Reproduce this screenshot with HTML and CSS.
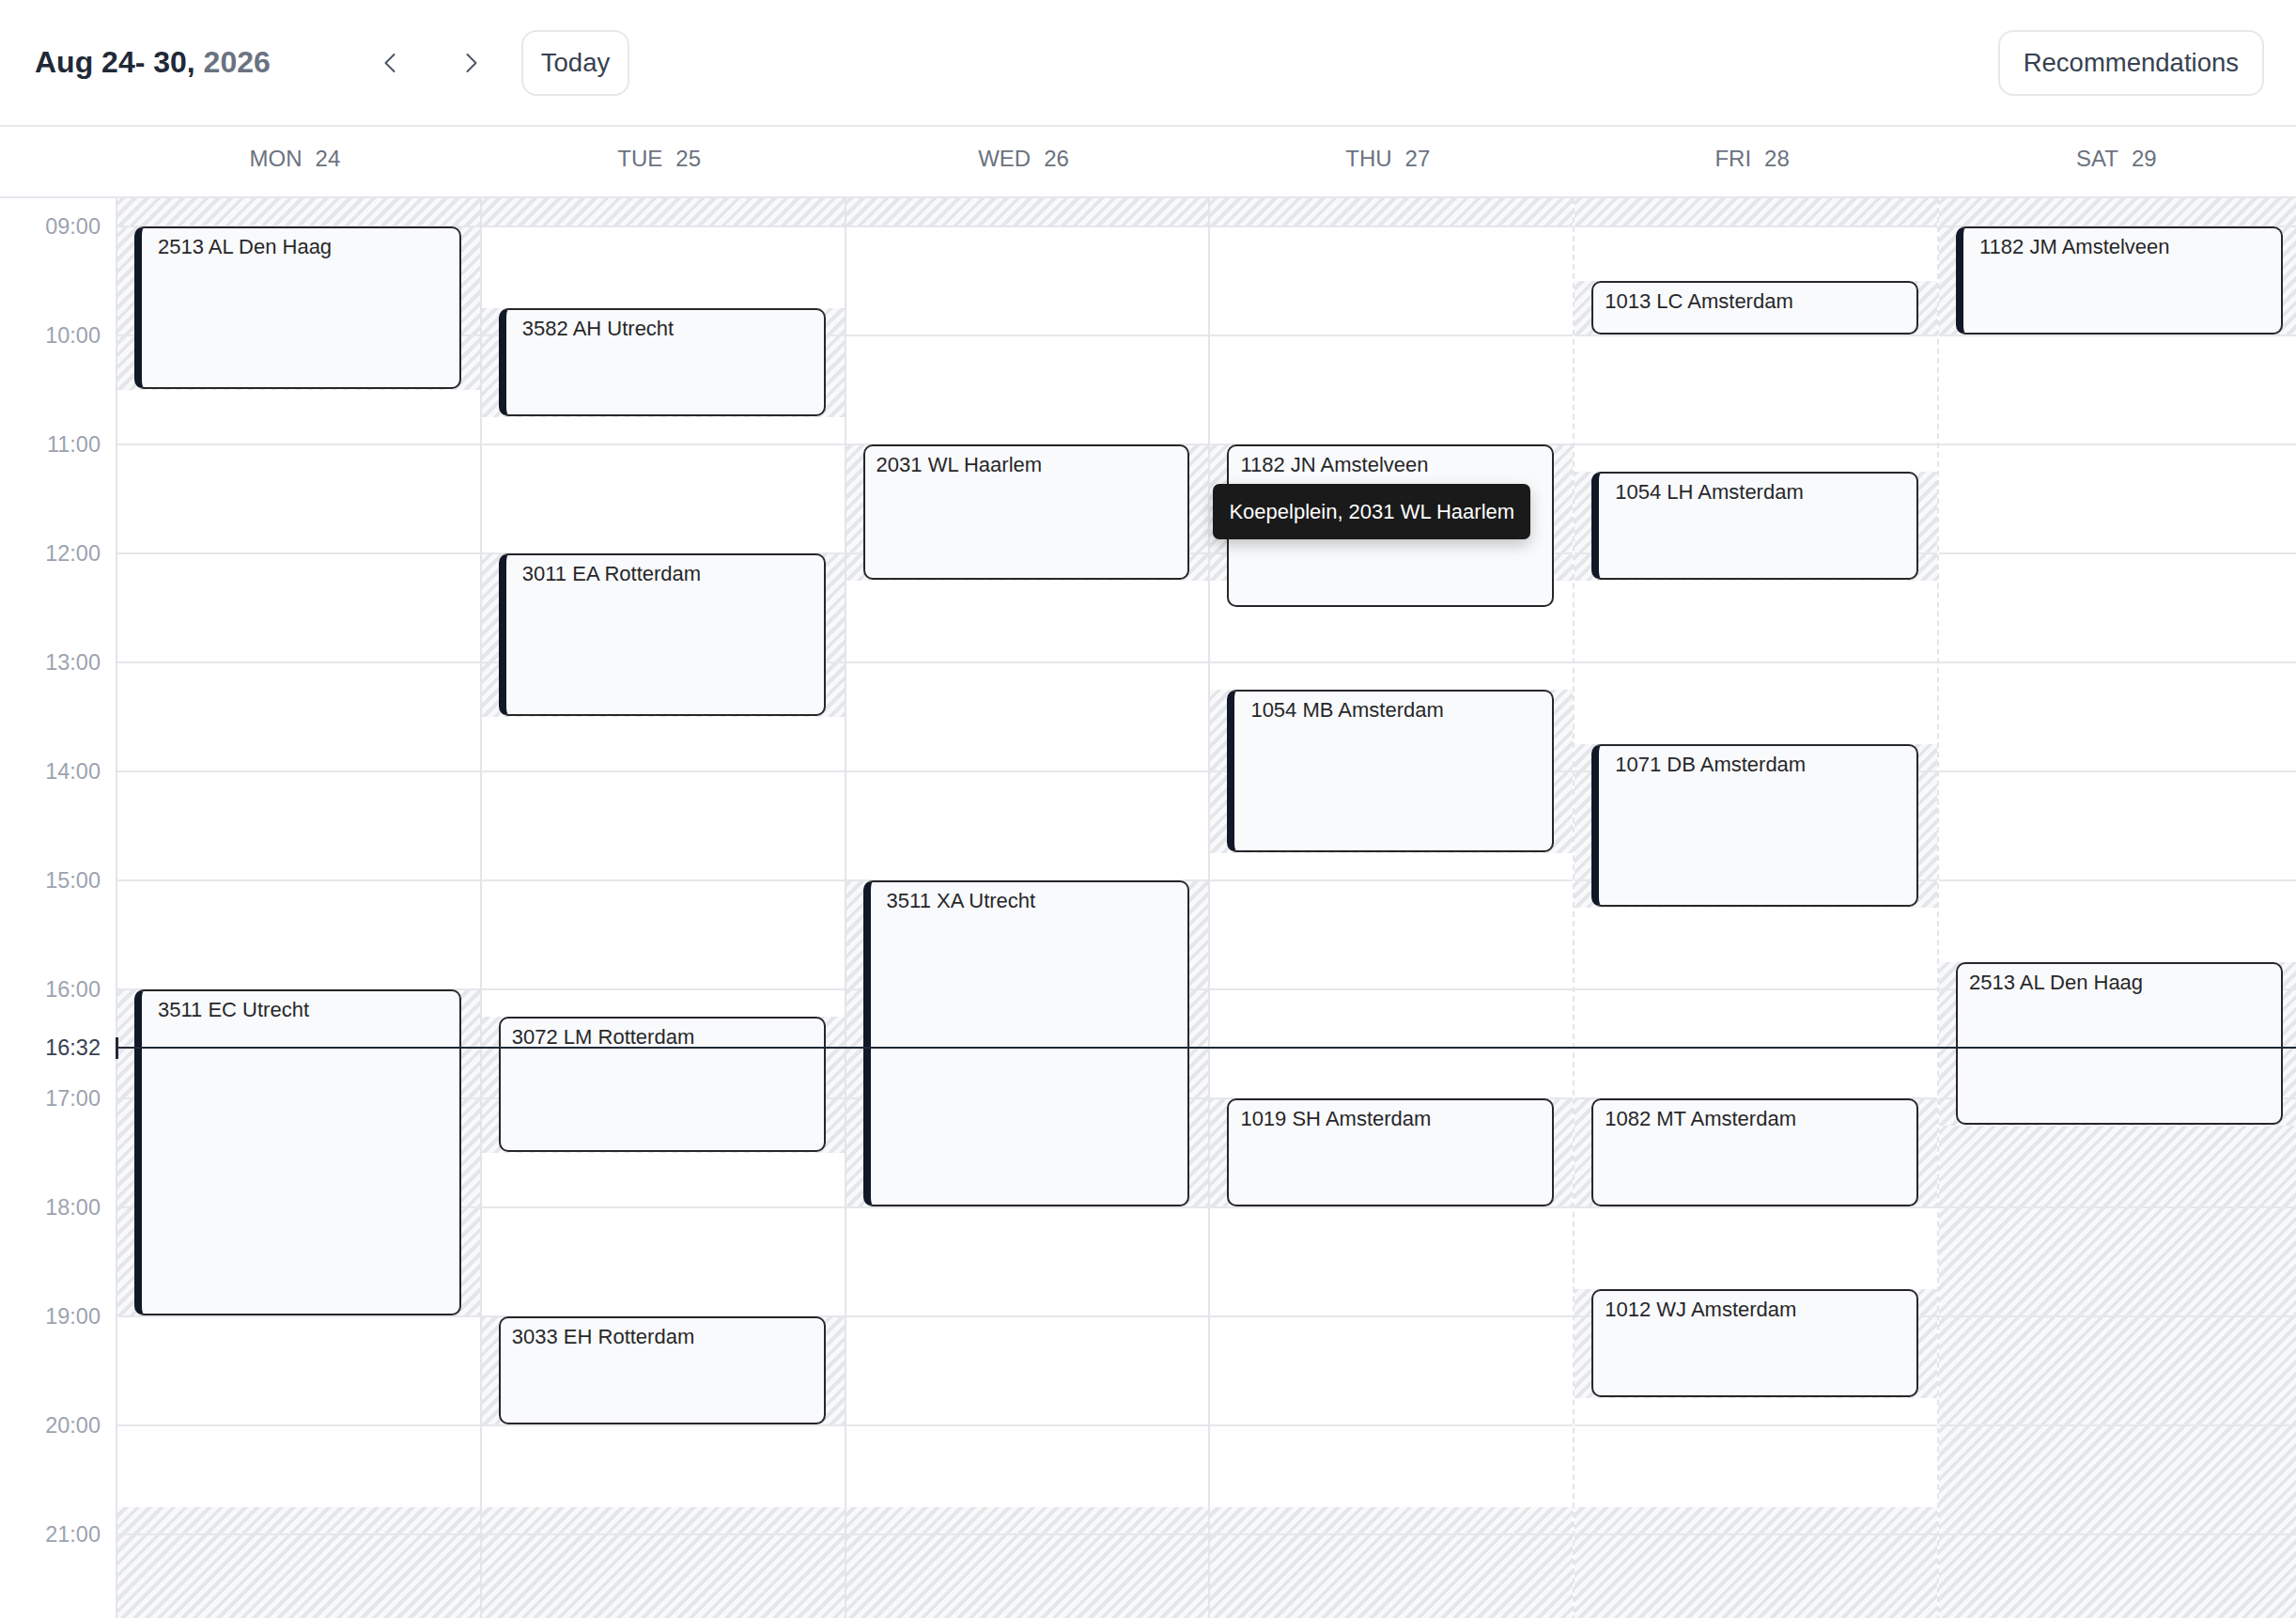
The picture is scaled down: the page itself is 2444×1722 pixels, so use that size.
FILE: index.html
```html
<!DOCTYPE html>
<html lang="en">
<head>
    <meta charset="UTF-8">
    <meta name="viewport" content="width=device-width, initial-scale=1.0">
    <title>Week planner</title>
    <link rel="stylesheet" href="styles.css">
</head>
<body>
    <header class="toolbar">
        <h1 class="range">Aug 24- 30, <span class="year">2026</span></h1>
        <button class="icon-btn prev" aria-label="Previous week">
            <svg width="20" height="24" viewBox="0 0 20 24"><path d="M14.5 3 L5.5 12 L14.5 21"/></svg>
        </button>
        <button class="icon-btn next" aria-label="Next week">
            <svg width="20" height="24" viewBox="0 0 20 24"><path d="M5.5 3 L14.5 12 L5.5 21"/></svg>
        </button>
        <button class="btn today">Today</button>
        <button class="btn recs">Recommendations</button>
    </header>

    <div class="week">
        <div class="week-head">
            <div class="corner"></div>
            <div class="day-name"><span>MON</span><span>24</span></div>
            <div class="day-name"><span>TUE</span><span>25</span></div>
            <div class="day-name"><span>WED</span><span>26</span></div>
            <div class="day-name"><span>THU</span><span>27</span></div>
            <div class="day-name"><span>FRI</span><span>28</span></div>
            <div class="day-name"><span>SAT</span><span>29</span></div>
        </div>

        <div class="week-body" id="week-body">
            <div class="gutter" id="gutter"></div>
            <div class="day"></div>
            <div class="day"></div>
            <div class="day"></div>
            <div class="day">
                <div class="tooltip">Koepelplein, 2031 WL Haarlem</div>
            </div>
            <div class="day upcoming"></div>
            <div class="day upcoming"></div>
            <div class="now" id="now">
                <span class="now-label">16:32</span>
            </div>
        </div>
    </div>

    <script>
        const HOUR = 116;     // px per hour
        const FIRST = 9;      // first labelled hour
        const LAST = 21;      // last labelled hour
        const OFFSET = 30;    // room above the 09:00 line
        const NOW = 16 + 32 / 60;

        const y = t => OFFSET + (t - FIRST) * HOUR;

        // [start, end, label, booked, hatchEnd]
        const week = [
            { events: [
                [9, 10.5, '2513 AL Den Haag', true],
                [16, 19, '3511 EC Utrecht', true]
            ]},
            { events: [
                [9.75, 10.75, '3582 AH Utrecht', true],
                [12, 13.5, '3011 EA Rotterdam', true],
                [16.25, 17.5, '3072 LM Rotterdam'],
                [19, 20, '3033 EH Rotterdam']
            ]},
            { events: [
                [11, 12.25, '2031 WL Haarlem'],
                [15, 18, '3511 XA Utrecht', true]
            ]},
            { events: [
                [11, 12.5, '1182 JN Amstelveen', false, 12.25],
                [13.25, 14.75, '1054 MB Amsterdam', true],
                [17, 18, '1019 SH Amsterdam']
            ]},
            { events: [
                [9.5, 10, '1013 LC Amsterdam'],
                [11.25, 12.25, '1054 LH Amsterdam', true],
                [13.75, 15.25, '1071 DB Amsterdam', true],
                [17, 18, '1082 MT Amsterdam'],
                [18.75, 19.75, '1012 WJ Amsterdam']
            ]},
            { events: [
                [9, 10, '1182 JM Amstelveen', true],
                [15.75, 17.25, '2513 AL Den Haag']
            ], blocked: [[15.75, 24]] }
        ];

        function block(col, top, bottom, cls) {
            const el = document.createElement('div');
            el.className = cls;
            el.style.top = top + 'px';
            el.style.height = (bottom - top) + 'px';
            col.appendChild(el);
            return el;
        }

        // hour labels
        const gutter = document.getElementById('gutter');
        for (let h = FIRST; h <= LAST; h++) {
            const label = document.createElement('div');
            label.className = 'hour';
            label.textContent = String(h).padStart(2, '0') + ':00';
            gutter.appendChild(label);
        }

        document.querySelectorAll('.day').forEach((col, i) => {
            const day = week[i];

            // closed hours before and after the working day
            block(col, 0, y(FIRST), 'hatch');
            block(col, y(20.75), y(24), 'hatch');
            (day.blocked || []).forEach(([s, e]) => block(col, y(s), y(e), 'hatch'));

            day.events.forEach(([start, end, label, booked, hatchEnd]) => {
                block(col, y(start), y(hatchEnd || end), 'hatch');
                const ev = block(col, y(start), y(end) - 1, booked ? 'event booked' : 'event');
                ev.textContent = label;
            });
        });

        document.getElementById('now').style.top = y(NOW) + 'px';
    </script>
</body>
</html>
```

FILE: styles.css
```css
html, body {
    height: 100%;
}
body {
    margin: 0;
    font-family: "Liberation Sans", Arial, sans-serif;
    color: #1f2937;
    background: #fff;
    display: flex;
    flex-direction: column;
    overflow: hidden;
}

/* top bar */
.toolbar {
    display: flex;
    align-items: center;
    flex-shrink: 0;
    height: 133px;
    padding: 0 34px 0 37px;
    border-bottom: 2px solid #e5e7eb;
}
.range {
    margin: 0;
    font-size: 32px;
    font-weight: bold;
    color: #1f2937;
}
.year {
    color: #6b7280;
}
.icon-btn {
    display: flex;
    align-items: center;
    justify-content: center;
    width: 60px;
    height: 60px;
    padding: 0;
    border: none;
    background: none;
}
.icon-btn path {
    fill: none;
    stroke: #4b5563;
    stroke-width: 2;
    stroke-linecap: round;
    stroke-linejoin: round;
}
.prev {
    margin-left: 97px;
}
.next {
    margin-left: 27px;
}
.btn {
    height: 70px;
    font-family: "Liberation Sans", Arial, sans-serif;
    font-size: 27.5px;
    color: #374151;
    background: #fff;
    border: 2px solid #e7e8eb;
    border-radius: 16px;
}
.today {
    margin-left: 23px;
    padding: 0 19px;
}
.recs {
    margin-left: auto;
    padding: 0 25px;
}

/* week grid */
.week {
    flex: 1;
    overflow: hidden;
}
.week-head,
.week-body {
    display: grid;
    grid-template-columns: 123px repeat(6, 387.8px);
    width: max-content;
}
.week-head {
    height: 74px;
    border-bottom: 2px solid #e5e7eb;
}
.day-name {
    display: flex;
    align-items: center;
    justify-content: center;
    gap: 14px;
    padding: 0 6px 6px 0;
    font-size: 24px;
    color: #6b7280;
}

.week-body {
    position: relative;
}
.gutter {
    display: flex;
    flex-direction: column;
    align-items: flex-end;
    padding-right: 16px;
}
.hour {
    display: flex;
    align-items: center;
    flex-shrink: 0;
    height: 116px;
    font-size: 23.5px;
    color: #9ca3af;
}
.hour:first-child {
    margin-top: -28px;
}

.day {
    position: relative;
    height: 1654px;
    border-left: 2px solid #e3e5e9;
}
.day.upcoming {
    border-left-style: dashed;
}
/* hour lines sit above the hatching, below the events */
.day::after {
    content: "";
    position: absolute;
    inset: 0;
    z-index: 1;
    pointer-events: none;
    background-image: linear-gradient(to bottom, #e5e7eb 0 2px, transparent 2px);
    background-size: 100% 116px;
    background-position: 0 29px;
    background-repeat: repeat-y;
}
.hatch {
    position: absolute;
    left: 0;
    right: 0;
    z-index: 0;
    background: repeating-linear-gradient(-45deg, #e5e6ea 0 4px, #f8f9fa 4px 9px);
}

.event {
    position: absolute;
    left: 18px;
    right: 20px;
    z-index: 2;
    box-sizing: border-box;
    padding: 7px 12px;
    background: #f9fafb;
    border: 2px solid #27272a;
    border-radius: 10px;
    font-size: 22px;
    line-height: 26px;
    color: #27272a;
    white-space: nowrap;
    overflow: hidden;
}
.event.booked {
    border-left: 8px solid #111827;
    padding-left: 17px;
}

.tooltip {
    position: absolute;
    left: 3px;
    top: 304px;
    z-index: 5;
    padding: 17px;
    background: #1a1a1a;
    color: #fff;
    font-size: 22px;
    line-height: 25px;
    border-radius: 7px;
    white-space: nowrap;
    box-shadow: 0 6px 16px rgba(0, 0, 0, 0.22);
}

/* current time marker */
.now {
    position: absolute;
    left: 0;
    right: 0;
    height: 0;
    z-index: 4;
}
.now::before {
    content: "";
    position: absolute;
    left: 123px;
    right: 0;
    top: -1px;
    height: 2px;
    background: #1f2937;
}
.now::after {
    content: "";
    position: absolute;
    left: 123px;
    top: -11px;
    width: 3px;
    height: 23px;
    background: #1f2937;
}
.now-label {
    position: absolute;
    left: 0;
    width: 107px;
    top: -14px;
    line-height: 28px;
    text-align: right;
    font-size: 23.5px;
    color: #374151;
}
```
